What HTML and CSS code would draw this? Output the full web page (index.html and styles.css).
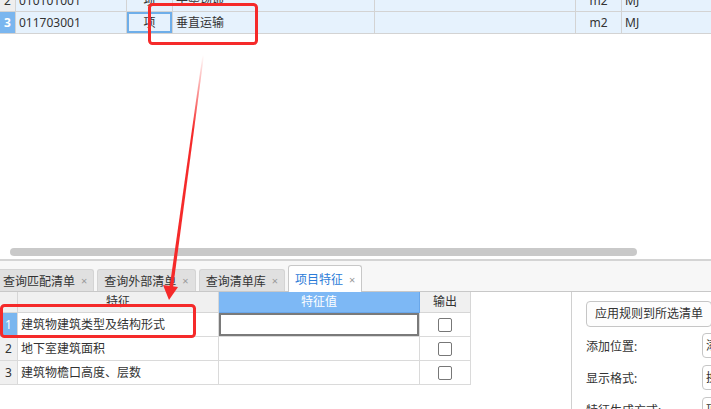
FILE: index.html
```html
<!DOCTYPE html>
<html lang="zh-CN">
<head>
    <meta charset="UTF-8">
    <title>项目特征</title>
    <link rel="stylesheet" href="styles.css">
</head>
<body>
<div class="page">
    <div class="top">
        <div class="bill">
            <div class="bill-row">
                <div class="num">2</div>
                <div>010101001</div>
                <div class="unit">项</div>
                <div>平整场地</div>
                <div></div>
                <div class="qty">m2</div>
                <div>MJ</div>
            </div>
            <div class="bill-row">
                <div class="num on">3</div>
                <div>011703001</div>
                <div class="unit sel">项</div>
                <div>垂直运输</div>
                <div></div>
                <div class="qty">m2</div>
                <div>MJ</div>
            </div>
        </div>
        <div class="hbar"></div>
    </div>

    <div class="tabs">
        <div class="tab first">查询匹配清单<span class="x">×</span></div>
        <div class="tab">查询外部清单<span class="x">×</span></div>
        <div class="tab">查询清单库<span class="x">×</span></div>
        <div class="tab active">项目特征<span class="x">×</span></div>
    </div>

    <div class="pane">
        <div class="feat">
            <div class="feat-row head">
                <div></div>
                <div>特征</div>
                <div class="val">特征值</div>
                <div>输出</div>
            </div>
            <div class="feat-row">
                <div class="num on">1</div>
                <div>建筑物建筑类型及结构形式</div>
                <div class="cur"></div>
                <div class="out"><span class="chk"></span></div>
            </div>
            <div class="feat-row">
                <div class="num">2</div>
                <div>地下室建筑面积</div>
                <div></div>
                <div class="out"><span class="chk"></span></div>
            </div>
            <div class="feat-row">
                <div class="num">3</div>
                <div>建筑物檐口高度、层数</div>
                <div></div>
                <div class="out"><span class="chk"></span></div>
            </div>
        </div>
        <div class="side">
            <div class="btn">应用规则到所选清单</div>
            <div class="opt"><span class="lbl">添加位置:</span><span class="box">添加到项目特征列</span></div>
            <div class="opt"><span class="lbl">显示格式:</span><span class="box">换行</span></div>
            <div class="opt"><span class="lbl">特征生成方式:</span><span class="box">项目特征:项目特征值</span></div>
        </div>
    </div>

    <!-- annotation marks drawn over the screenshot -->
    <svg class="marks" width="711" height="409" viewBox="0 0 711 409">
        <defs>
            <linearGradient id="fade" gradientUnits="userSpaceOnUse" x1="0" y1="55" x2="0" y2="130">
                <stop offset="0" stop-color="#f52a2a" stop-opacity="0"/>
                <stop offset="1" stop-color="#f52a2a" stop-opacity="1"/>
            </linearGradient>
        </defs>
        <rect x="149.5" y="4.5" width="107" height="39" rx="3" fill="none" stroke="#f52a2a" stroke-width="3"/>
        <rect x="1.5" y="305.5" width="193" height="31" rx="3" fill="none" stroke="#f52a2a" stroke-width="3"/>
        <polygon points="202.5,55 204,55 173,288 169.5,288" fill="url(#fade)"/>
        <polygon points="163,285 178,287 169,300" fill="#f52a2a"/>
    </svg>
</div>
</body>
</html>
```

FILE: styles.css
```css
* { box-sizing: border-box; }
body { margin: 0; background: #fff; color: #333; font-family: "Noto Sans", "Noto Sans CJK SC", sans-serif; font-size: 12px; }
.page { position: relative; width: 711px; height: 409px; overflow: hidden; }

/* bill list */
.top { height: 261px; display: flex; flex-direction: column; overflow: hidden; border-bottom: 2px solid #d4d4d4; }
.bill { margin-top: -10px; }
.bill-row { display: grid; grid-template-columns: 16px 111px 46px 202px 201px 46px 89px; height: 22px; background: #e6f2fd; border-bottom: 1px solid #d3d3d3; }
.bill-row > div { border-right: 1px solid #d3d3d3; line-height: 21px; padding-left: 3px; white-space: nowrap; overflow: hidden; }
.bill-row > div:last-child { border-right: none; }
.bill-row .num { padding: 0; text-align: center; background: #eeeeee; }
.num.on { background: #7ab6ef; color: #fff; font-weight: bold; }
.bill-row .unit, .bill-row .qty { padding: 0; text-align: center; }
.unit.sel { box-shadow: inset 0 0 0 2px #6eaee9; }
.hbar { margin-top: auto; margin-left: 10px; margin-bottom: 3px; width: 627px; height: 8px; border-radius: 4px; background: #c9c9c9; flex-shrink: 0; }

/* tabs */
.tabs { height: 31px; display: flex; align-items: flex-end; gap: 3px; background: #f7f7f7; border-bottom: 1px solid #c8c8c8; }
.tab { height: 22px; display: flex; align-items: center; padding: 0 6px 0 6px; background: #e0e0e0; border: 1px solid #d4d4d4; border-bottom: none; border-radius: 3px 3px 0 0; white-space: nowrap; }
.tab.first { margin-left: -4px; }
.tab .x { margin-left: 6px; color: #9a9a9a; font-size: 11px; }
.tab.active { height: 27px; background: #fff; border-color: #c8c8c8; margin-bottom: -1px; color: #2b7bd8; }

/* feature grid */
.pane { display: flex; height: 117px; }
.feat { width: 572px; border-right: 1px solid #d0d0d0; }
.feat-row { display: grid; grid-template-columns: 18px 201px 201px 51px; height: 24px; }
.feat-row > div { border-right: 1px solid #dadada; border-bottom: 1px solid #dadada; line-height: 23px; padding-left: 3px; white-space: nowrap; overflow: hidden; }
.feat-row.head { height: 21px; }
.feat-row.head > div { background: #f0f0f0; border-color: #d6d6d6; text-align: center; line-height: 20px; padding: 0; }
.feat-row.head .val { background: #7db8f5; color: #fff; border-color: #69a7ea; }
.feat-row .num { padding: 0; text-align: center; background: #f0f0f0; }
.feat-row .num.on { background: #7ab6ef; color: #fff; font-weight: normal; }
.feat-row .cur { box-shadow: inset 0 0 0 2px #7a7a7a; }
.feat-row .out { padding: 0; display: flex; align-items: center; justify-content: center; }
.chk { width: 14px; height: 14px; border: 1px solid #777; border-radius: 2px; background: #fff; }

/* side panel */
.side { flex: 1; padding: 9px 0 0 14px; overflow: hidden; white-space: nowrap; }
.btn { width: 126px; height: 26px; border: 1px solid #c6c6c6; border-radius: 4px; background: #fdfdfd; padding-left: 8px; line-height: 24px; }
.opt { display: flex; align-items: center; height: 25px; margin-top: 7px; }
.btn + .opt { margin-top: 6px; }
.lbl { width: 116px; flex-shrink: 0; }
.box { height: 25px; width: 80px; flex-shrink: 0; border: 1px solid #c6c6c6; border-radius: 4px; padding-left: 3px; line-height: 23px; overflow: hidden; }

.marks { position: absolute; left: 0; top: 0; pointer-events: none; }
```
